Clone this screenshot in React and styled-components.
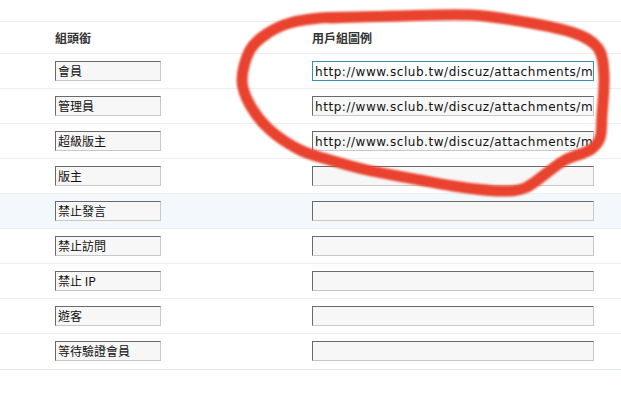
import React from 'react';
import styled, { createGlobalStyle } from 'styled-components';

const GlobalStyle = createGlobalStyle`
  html, body {
    margin: 0;
    padding: 0;
    background: #fff;
  }
  body {
    font-family: "Noto Sans CJK TC", "Liberation Sans", sans-serif;
    font-size: 12px;
    color: #000;
  }
`;

const Page = styled.div`
  position: relative;
  width: 621px;
  height: 399px;
  overflow: hidden;
  padding-top: 21px;
  box-sizing: border-box;
`;

const Table = styled.div`
  border-top: 1px solid #eceff0;
  border-bottom: 1px solid #dbe9f3;
`;

const Row = styled.div`
  display: grid;
  grid-template-columns: 257px 1fr;
  align-items: start;
  height: ${p => (p.head ? 32 : 35)}px;
  padding: ${p => (p.head ? '0' : '7px')} 0 0 55px;
  box-sizing: border-box;
  border-bottom: ${p => (p.last ? 'none' : '1px solid #eceff0')};
  background: ${p => (p.hover ? '#f2f8fc' : 'transparent')};
`;

const HeadCell = styled.div`
  font-weight: bold;
  color: #333;
  line-height: 31px;
  font-size: 12px;
`;

const Field = styled.div`
  box-sizing: border-box;
  width: ${p => p.w}px;
  height: 20px;
  line-height: 18px;
  padding-left: 2px;
  white-space: nowrap;
  overflow: hidden;
  background: ${p => (p.focus ? '#fbfdfe' : '#f7f7f7')};
  border: 1px solid;
  border-color: ${p => (p.focus ? '#3a8fb7' : '#6a6a6a #c8c8c8 #c8c8c8 #6a6a6a')};
  color: #111;
  font-size: 12px;
`;

const UrlText = styled.span`
  font-family: "DejaVu Sans", Verdana, sans-serif;
  font-size: 12px;
  letter-spacing: 0.55px;
`;

const Overlay = styled.svg`
  position: absolute;
  left: 0;
  top: 0;
  pointer-events: none;
`;

const groups = [
  { name: '會員', url: true, focus: true },
  { name: '管理員', url: true },
  { name: '超級版主', url: true },
  { name: '版主' },
  { name: '禁止發言', hover: true },
  { name: '禁止訪問' },
  { name: '禁止 IP' },
  { name: '遊客' },
  { name: '等待驗證會員' },
];

const URL = 'http://www.sclub.tw/discuz/attachments/m';

const stroke = [
  [330, 18], [395, 16], [470, 15], [525, 22], [574, 33], [598, 48], [604, 75],
  [602, 115], [600, 138], [590, 150], [565, 160], [548, 172], [525, 188],
  [500, 191], [460, 187], [420, 180], [367, 170], [330, 160], [300, 150],
  [270, 130], [250, 105], [242, 80], [250, 50], [268, 33], [290, 23],
  [320, 18], [355, 17], [405, 16],
];

// catmull-rom -> cubic bezier
function smooth(pts) {
  let d = `M ${pts[0][0]} ${pts[0][1]}`;
  for (let i = 0; i < pts.length - 1; i++) {
    const p0 = pts[i - 1] || pts[i];
    const p1 = pts[i];
    const p2 = pts[i + 1];
    const p3 = pts[i + 2] || p2;
    const c1 = [p1[0] + (p2[0] - p0[0]) / 6, p1[1] + (p2[1] - p0[1]) / 6];
    const c2 = [p2[0] - (p3[0] - p1[0]) / 6, p2[1] - (p3[1] - p1[1]) / 6];
    d += ` C ${c1[0]} ${c1[1]} ${c2[0]} ${c2[1]} ${p2[0]} ${p2[1]}`;
  }
  return d;
}

export default function App() {
  return (
    <Page>
      <GlobalStyle />
      <Table>
        <Row head>
          <HeadCell>組頭銜</HeadCell>
          <HeadCell>用戶組圖例</HeadCell>
        </Row>
        {groups.map((g, i) => (
          <Row key={g.name} hover={g.hover} last={i === groups.length - 1}>
            <Field w={106}>{g.name}</Field>
            <Field w={282} focus={g.focus}>
              {g.url && <UrlText>{URL}</UrlText>}
            </Field>
          </Row>
        ))}
      </Table>
      <Overlay width="621" height="399" viewBox="0 0 621 399">
        <defs>
          <filter id="soft">
            <feGaussianBlur stdDeviation="0.8" />
          </filter>
        </defs>
        <path
          d={smooth(stroke)}
          fill="none"
          stroke="#e9432d"
          strokeWidth="11"
          strokeLinecap="round"
          strokeLinejoin="round"
          filter="url(#soft)"
        />
      </Overlay>
    </Page>
  );
}
